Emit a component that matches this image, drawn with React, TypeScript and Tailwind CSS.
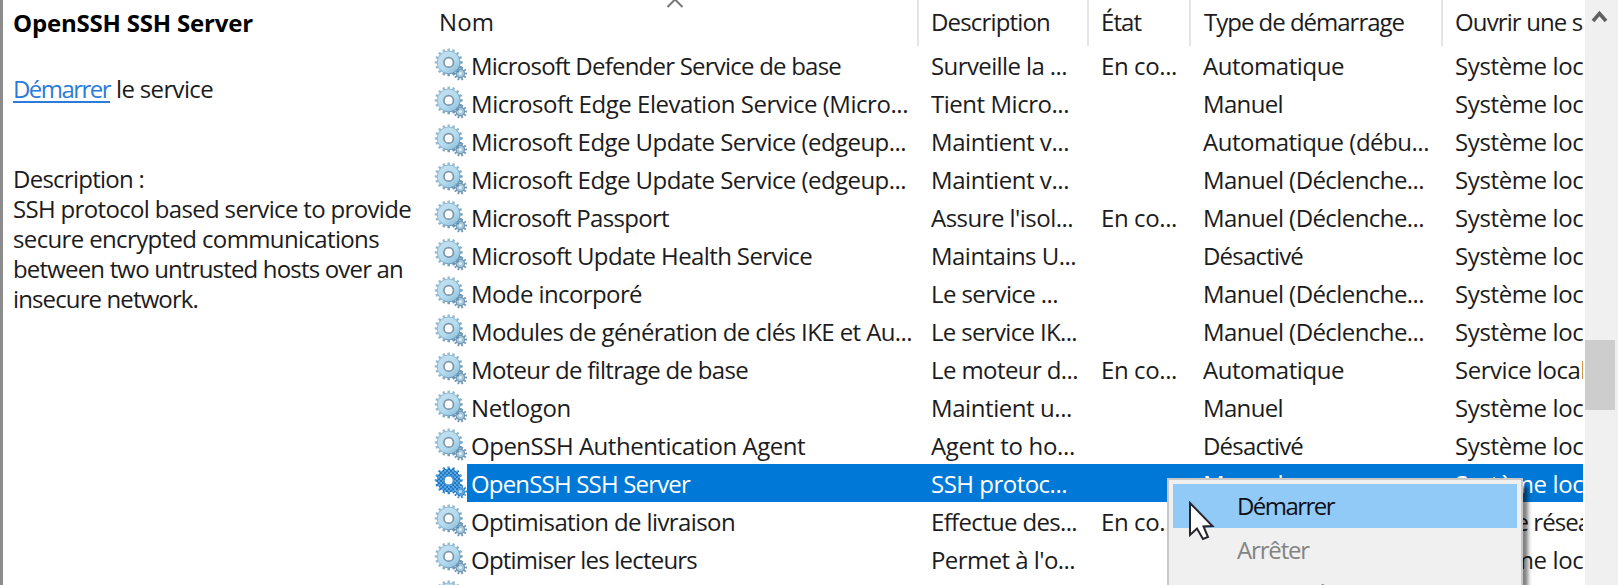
import React, { useLayoutEffect, useRef, useState } from 'react';

type Cell = [string, number];

const AUTO: Cell = ['Automatique', 141];
const MANUAL: Cell = ['Manuel', 80];
const AUTO_DELAYED: Cell = ['Automatique (débu...', 226];
const MANUAL_TRIGGER: Cell = ['Manuel (Déclenche...', 221];
const DISABLED: Cell = ['Désactivé', 100];
const RUNNING: Cell = ['En co...', 76];
const NONE: Cell = ['', 0];
const SYSTEM: Cell = ['Système local', 147];

const rows: Cell[][] = [
  [['Microsoft Defender Service de base', 370], ['Surveille la ...', 136], RUNNING, AUTO, SYSTEM],
  [['Microsoft Edge Elevation Service (Micro...', 437], ['Tient Micro...', 138], NONE, MANUAL, SYSTEM],
  [['Microsoft Edge Update Service (edgeup...', 435], ['Maintient v...', 138], NONE, AUTO_DELAYED, SYSTEM],
  [['Microsoft Edge Update Service (edgeup...', 435], ['Maintient v...', 138], NONE, MANUAL_TRIGGER, SYSTEM],
  [['Microsoft Passport', 198], ["Assure l'isol...", 142], RUNNING, MANUAL_TRIGGER, SYSTEM],
  [['Microsoft Update Health Service', 341], ['Maintains U...', 145], NONE, DISABLED, SYSTEM],
  [['Mode incorporé', 171], ['Le service ...', 127], NONE, MANUAL_TRIGGER, SYSTEM],
  [['Modules de génération de clés IKE et Au...', 441], ['Le service IK...', 146], NONE, MANUAL_TRIGGER, SYSTEM],
  [['Moteur de filtrage de base', 277], ['Le moteur d...', 147], RUNNING, AUTO, ['Service local', 131]],
  [['Netlogon', 100], ['Maintient u...', 141], NONE, MANUAL, SYSTEM],
  [['OpenSSH Authentication Agent', 334], ['Agent to ho...', 144], NONE, DISABLED, SYSTEM],
  [['OpenSSH SSH Server', 219], ['SSH protoc...', 136], NONE, MANUAL, SYSTEM],
  [['Optimisation de livraison', 264], ['Effectue des...', 146], RUNNING, AUTO_DELAYED, ['Service réseau', 149]],
  [['Optimiser les lecteurs', 226], ["Permet à l'o...", 144], NONE, MANUAL, SYSTEM],
  [NONE, NONE, NONE, NONE, NONE],
];

// Sets a label to a fixed advance width by spreading the difference over its letters.
function Label({ text, width }: { text: string; width: number }) {
  const ref = useRef<HTMLSpanElement>(null);
  const [spacing, setSpacing] = useState(0);
  useLayoutEffect(() => {
    if (ref.current && text.length > 0 && width > 0) {
      setSpacing((width - ref.current.getBoundingClientRect().width) / text.length);
    }
  }, [text, width]);
  return (
    <span ref={ref} className="inline-block whitespace-nowrap" style={{ letterSpacing: `${spacing}px` }}>
      {text}
    </span>
  );
}

function teeth(cx: number, cy: number, outer: number, inner: number, n: number) {
  let d = '';
  const step = (Math.PI * 2) / n;
  for (let i = 0; i < n; i++) {
    const a = i * step;
    [[-0.27, inner], [-0.22, outer], [0.22, outer], [0.27, inner]].forEach(([o, r], k) => {
      const x = cx + r * Math.cos(a + o * step);
      const y = cy + r * Math.sin(a + o * step);
      d += `${i === 0 && k === 0 ? 'M' : 'L'}${x.toFixed(2)} ${y.toFixed(2)}`;
    });
  }
  return d + 'Z';
}

const bigGear = teeth(14.7, 14.4, 14, 11.8, 16);
const smallGear = teeth(26.3, 25.5, 7, 4.8, 10);

function Gears({ selected }: { selected: boolean }) {
  return (
    <svg className="ml-[4px] mt-[2px] h-[33px] w-[33px] shrink-0" viewBox="0 0 33 33">
      <defs>
        <linearGradient id="gear" x1="0" y1="0" x2="1" y2="1">
          <stop offset="0" stopColor="#9dbdd2" />
          <stop offset="0.5" stopColor="#8fb9d2" />
          <stop offset="1" stopColor="#4f7fa3" />
        </linearGradient>
        <linearGradient id="face" x1="0" y1="0" x2="0.8" y2="1">
          <stop offset="0" stopColor="#c3dfee" />
          <stop offset="0.6" stopColor="#b5dcef" />
          <stop offset="1" stopColor="#8fc2dd" />
        </linearGradient>
        <pattern id="dither" width="4" height="4" patternUnits="userSpaceOnUse">
          <rect width="4" height="4" fill="#5aa2da" />
          <rect width="2" height="2" fill="#1f7bc9" />
          <rect x="2" y="2" width="2" height="2" fill="#1f7bc9" />
        </pattern>
      </defs>
      <path d={smallGear} fill={selected ? 'url(#dither)' : '#7197b3'} />
      <circle cx="26.3" cy="25.5" r="3.6" fill={selected ? '#5aa2da' : '#a5c8dc'} />
      <circle cx="26.3" cy="25.5" r="1.6" fill={selected ? '#c5e0f5' : '#e3edf3'} />
      <path d={bigGear} fill={selected ? 'url(#dither)' : 'url(#gear)'} />
      {!selected && <circle cx="14.7" cy="14.4" r="10.8" fill="url(#face)" />}
      <circle cx="14.7" cy="14.4" r="5.6" fill={selected ? '#3d90d4' : '#8096a8'} />
      <circle cx="14.7" cy="14.4" r="3.9" fill="#fff" />
    </svg>
  );
}

function Header({ label, width, className }: { label: string; width: number; className: string }) {
  return (
    <div className={`h-full shrink-0 overflow-hidden whitespace-nowrap border-[#e5e5e5] pt-[5px] leading-[34px] ${className}`}>
      <Label text={label} width={width} />
    </div>
  );
}

const about: Cell[] = [
  ['SSH protocol based service to provide', 398],
  ['secure encrypted communications', 366],
  ['between two untrusted hosts over an', 390],
  ['insecure network.', 185],
];

export default function App() {
  return (
    <div className="relative flex h-[585px] w-[1618px] overflow-hidden bg-white font-['Open_Sans','Noto_Sans',sans-serif] text-[24px] font-[450] text-[#1c1c20] [font-stretch:88%]">
      <aside className="w-[430px] shrink-0 border-l-[3px] border-[#8c8c8c] pl-[10px] leading-[30px]">
        <h1 className="pt-[8px] font-bold text-black">
          <Label text="OpenSSH SSH Server" width={240} />
        </h1>
        <p className="mt-[36px] flex">
          <a className="h-[29px] border-b-2 border-[#2b7cd8] text-[#2b7cd8]">
            <Label text="Démarrer" width={97} />
          </a>
          <span className="ml-[6px]">
            <Label text="le service" width={97} />
          </span>
        </p>
        <p className="mt-[60px]">
          <Label text="Description :" width={131} />
        </p>
        {about.map(([text, width]) => (
          <p key={text}>
            <Label text={text} width={width} />
          </p>
        ))}
      </aside>

      <main className="relative w-[1153px] shrink-0 overflow-hidden">
        <div className="flex h-[46px]">
          <Header label="Nom" width={55} className="w-[489px] border-r-2 pl-[9px]" />
          <Header label="Description" width={119} className="w-[170px] border-r-2 pl-[12px]" />
          <Header label="État" width={40} className="w-[102px] border-r-2 pl-[12px]" />
          <Header label="Type de démarrage" width={200} className="w-[252px] border-r-2 pl-[13px]" />
          <Header label="Ouvrir une session en tant que" width={318} className="w-[141px] pl-[12px]" />
        </div>
        <svg className="absolute left-[236px] top-[-2px] h-[10px] w-[18px]" viewBox="0 0 18 10">
          <path d="M1.5 9 L9 1.5 L16.5 9" fill="none" stroke="#777" strokeWidth="2" />
        </svg>
        {rows.map((r, i) => {
          const selected = i === 11;
          return (
            <div key={i} className="flex h-[38px] whitespace-nowrap leading-[39px]">
              <Gears selected={selected} />
              <div className={`flex min-w-0 flex-1 ${selected ? 'bg-[#0078d7] text-white' : ''}`}>
                <span className="w-[464px] shrink-0 pl-[4px]"><Label text={r[0][0]} width={r[0][1]} /></span>
                <span className="w-[170px] shrink-0"><Label text={r[1][0]} width={r[1][1]} /></span>
                <span className="w-[102px] shrink-0"><Label text={r[2][0]} width={r[2][1]} /></span>
                <span className="w-[252px] shrink-0"><Label text={r[3][0]} width={r[3][1]} /></span>
                <span><Label text={r[4][0]} width={r[4][1]} /></span>
              </div>
            </div>
          );
        })}
      </main>

      <div className="ml-[2px] flex w-[33px] shrink-0 flex-col bg-[#f0f0f0]">
        <svg className="mt-[10px] h-[13px] w-[33px]" viewBox="0 0 33 13">
          <path d="M8 11 L14.500 3.500 L21 11" fill="none" stroke="#606060" strokeWidth="3.600" />
        </svg>
        <div className="mt-[317px] h-[70px] w-[30px] bg-[#cdcdcd]" />
      </div>

      <div className="absolute left-[1167px] top-[478px] h-[140px] w-[356px] border-2 border-[#c8c8c8] bg-[#f0f0f0] p-[4px] shadow-[6px_8px_4px_-1px_rgba(0,0,0,0.5)]">
        <div className="h-[44px] bg-[#91c9f7] pl-[64px] leading-[44px] text-[#101018]"><Label text="Démarrer" width={97} /></div>
        <div className="h-[44px] pl-[64px] leading-[44px] text-[#838383]"><Label text="Arrêter" width={72} /></div>
        <div className="h-[44px] pl-[64px] leading-[42px] text-[#838383]"><Label text="Suspendre" width={108} /></div>
      </div>
      <svg className="absolute left-[1188px] top-[501px] h-[40px] w-[27px]" viewBox="0 0 27 40">
        <path d="M2 2 L2 34 L9 27.500 L15 38 L20 36 L15.500 25.500 L24.500 25 Z" fill="#fff" stroke="#25252c" strokeWidth="2" />
      </svg>
    </div>
  );
}
